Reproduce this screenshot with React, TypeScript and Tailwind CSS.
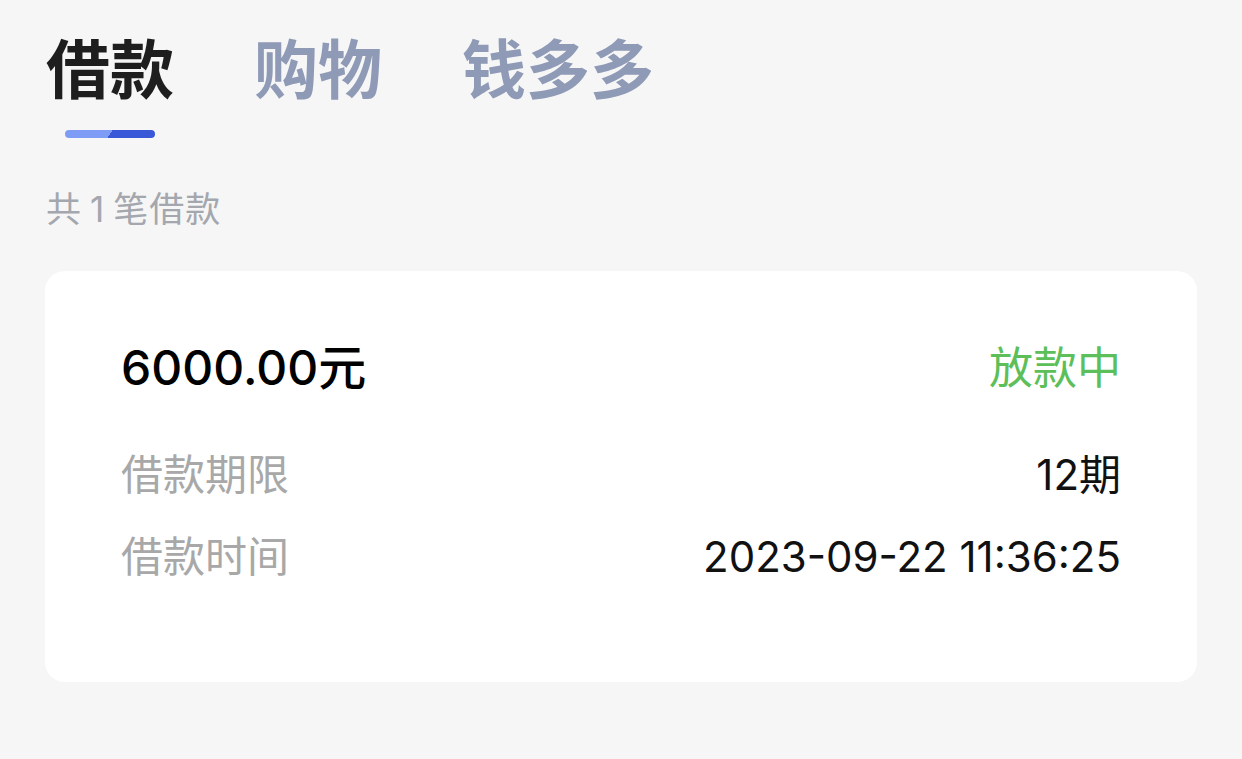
const cjk = "font-['Inter','Noto_Sans_CJK_SC',sans-serif]";

function Tab({ label, active }: { label: string; active?: boolean }) {
  return (
    <div className="flex flex-col items-center">
      <span
        className={`text-[64px] leading-[64px] font-bold ${
          active ? "text-[#1e1e1e]" : "text-[#8f9ab6]"
        }`}
      >
        {label}
      </span>
      {active && (
        <span className="mt-[28px] h-[8px] w-[90px] rounded-full bg-[linear-gradient(125deg,#7e9cf6_50%,#3858d8_50%)]" />
      )}
    </div>
  );
}

function Row({ label, value }: { label: string; value: string }) {
  return (
    <div className="flex items-center justify-between text-[42px] leading-[42px]">
      <span className="text-[#a8a8a8]">{label}</span>
      <span className="text-[#111]">{value}</span>
    </div>
  );
}

export default function App() {
  return (
    <div className={`h-screen w-full overflow-hidden bg-[#f6f6f6] px-[45px] ${cjk}`}>
      <div className="mt-[38px] flex items-start gap-[80px] pl-[1px]">
        <Tab label="借款" active />
        <Tab label="购物" />
        <Tab label="钱多多" />
      </div>

      <p className="mt-[54px] pl-[1px] text-[35px] leading-[35px] tracking-[1px] text-[#a4a7ae]">
        共<span className="mx-[8px]">1</span>笔借款
      </p>

      <div className="mt-[44px] h-[411px] rounded-[20px] bg-white px-[76px] pt-[73px]">
        <div className="flex items-center justify-between">
          <span className="text-[48px] leading-[48px] font-medium text-black">6000.00元</span>
          <span className="text-[44px] leading-[48px] text-[#5cbf5a]">放款中</span>
        </div>
        <div className="mt-[62px] flex flex-col gap-[40px]">
          <Row label="借款期限" value="12期" />
          <Row label="借款时间" value="2023-09-22 11:36:25" />
        </div>
      </div>
    </div>
  );
}
